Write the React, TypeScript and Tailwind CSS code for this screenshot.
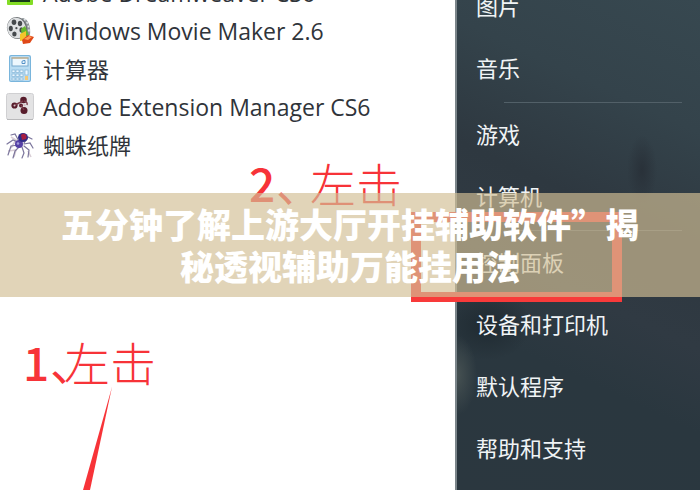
import type { ReactNode } from "react";

const glyph = "size-7 shrink-0";

function DreamweaverIcon() {
  return (
    <svg viewBox="0 0 28 28" className={glyph} aria-hidden="true">
      <rect x="1" y="0" width="26" height="26" rx="1" fill="#83dc25" />
      <rect x="4" y="3" width="20" height="20" fill="#173a19" />
    </svg>
  );
}

function MovieIcon() {
  return (
    <svg viewBox="0 0 28 28" className={glyph} aria-hidden="true">
      <path d="M17 1c5 1 8 8 7 17l-8 4-5-19z" fill="#8e9497" />
      <path d="M18 2c4 3 5 8 5 14" stroke="#dfe3e5" strokeWidth="1.6" strokeDasharray="2 2" fill="none" />
      <ellipse cx="11" cy="11" rx="10" ry="11" transform="rotate(-12 11 11)" fill="#6b6f72" />
      <ellipse cx="10.5" cy="11" rx="9.2" ry="10.4" transform="rotate(-12 10.5 11)" fill="#dfe1e3" />
      <g fill="#45494c">
        <ellipse cx="8" cy="5.2" rx="2.3" ry="2.7" />
        <ellipse cx="14" cy="6.5" rx="2.2" ry="2.8" />
        <ellipse cx="4.8" cy="11.5" rx="2" ry="2.8" />
        <ellipse cx="15.4" cy="13" rx="2" ry="2.7" />
        <ellipse cx="8.4" cy="17" rx="2.2" ry="2.6" />
        <circle cx="10.4" cy="11.2" r="1.1" />
      </g>
      <path d="M15 12l4-3 4 9-7 3z" fill="#68b82d" />
      <path d="M14 17l6-3v9l-6 1z" fill="#f3c52b" />
      <path d="M16 23l6-5 6 2-4 6-7 1z" fill="#df4818" />
      <path d="M18 22l5-3 3 1-4 3z" fill="#ff9b53" />
    </svg>
  );
}

function CalculatorIcon() {
  return (
    <svg viewBox="0 0 28 28" className={glyph} aria-hidden="true">
      <rect x="3" y="0" width="22" height="27" rx="2" fill="#79b5dc" />
      <rect x="4" y="1" width="20" height="25" rx="1.5" fill="#b9dcf2" />
      <rect x="6" y="3" width="16" height="8" fill="#edf7fd" stroke="#79aace" />
      <path d="M5.5 3h17" stroke="#dba968" />
      <path d="M18 5.5q-3 0-2 3h3v-3z" fill="none" stroke="#5592c8" />
      <g fill="#edf7ff" stroke="#83b4d6" strokeWidth=".7">
        <rect x="6" y="15" width="3" height="2.5" /><rect x="10" y="15" width="3" height="2.5" /><rect x="14" y="15" width="3" height="2.5" />
        <rect x="6" y="19" width="3" height="2.5" /><rect x="10" y="19" width="3" height="2.5" /><rect x="14" y="19" width="3" height="2.5" />
        <rect x="6" y="23" width="3" height="2" /><rect x="10" y="23" width="3" height="2" /><rect x="14" y="23" width="3" height="2" />
        <rect x="19" y="15" width="3" height="5" />
      </g>
      <rect x="19" y="21" width="3" height="4" fill="#f3c879" />
    </svg>
  );
}

function ExtensionIcon() {
  return (
    <svg viewBox="0 0 28 28" className={glyph} aria-hidden="true">
      <rect x=".5" y=".5" width="27" height="26" rx="2" fill="#e3e3e4" stroke="#d0d0d2" />
      <path d="M1 26.5h26" stroke="#b9b9bb" />
      <g fill="#571c2b">
        <circle cx="8.5" cy="12.5" r="3.1" /><circle cx="17.5" cy="7" r="3.3" /><circle cx="18" cy="17.5" r="3.5" /><circle cx="15" cy="12.5" r="2" />
      </g>
      <path d="M9 12l8-4M15 12l3 5M18 8q4 1 3 4" stroke="#793c4a" strokeWidth="1.4" fill="none" />
      <g fill="#d4bfc5"><circle cx="8.5" cy="12.5" r="1" /><circle cx="18.5" cy="12" r="1.2" /></g>
    </svg>
  );
}

function SpiderIcon() {
  return (
    <svg viewBox="0 0 28 28" className={glyph} aria-hidden="true">
      <path d="M5 6l5 3-5 8M2 20l8-1-2 7M22 20l3 6" stroke="#d9ced6" strokeWidth="1.6" fill="none" />
      <g fill="none" stroke="#7b759c" strokeWidth="1.2" strokeLinecap="round">
        <path d="M14 12L9 3 5 4M14 12L7 9 1 13M13 14L5 15 2 24M14 15L9 20 7 27M18 12L22 6 26 8M18 13L24 12 27 17M18 15L23 19 22 26M16 16L18 22 16 27" />
      </g>
      <ellipse cx="13" cy="13" rx="4" ry="4" fill="#5540a5" />
      <ellipse cx="17" cy="6.5" rx="5" ry="4.5" fill="#302b87" />
      <path d="M15 4c3-3 7 0 5 4l-4 1z" fill="#a71e42" />
      <circle cx="12" cy="12.5" r="1.3" fill="#a39bd9" />
    </svg>
  );
}

const programs: { name: string; latin?: boolean; icon: ReactNode }[] = [
  { name: "Adobe Dreamweaver CS6", latin: true, icon: <DreamweaverIcon /> },
  { name: "Windows Movie Maker 2.6", latin: true, icon: <MovieIcon /> },
  { name: "计算器", icon: <CalculatorIcon /> },
  { name: "Adobe Extension Manager CS6", latin: true, icon: <ExtensionIcon /> },
  { name: "蜘蛛纸牌", icon: <SpiderIcon /> },
];

const places = [["图片", "音乐"], ["游戏", "计算机"], ["控制面板", "设备和打印机", "默认程序", "帮助和支持"]];

function Note({ step, place, comma }: { step: string; place: string; comma: string }) {
  return (
    <div className={`absolute flex items-baseline whitespace-nowrap font-['Noto_Sans_CJK_SC',sans-serif] text-[46px] leading-[48px] text-[#f73338] ${place}`}>
      <span className="w-7 text-center font-medium">{step}</span>
      <span className={`font-normal ${comma}`}>、</span>
      <span className="font-light">左击</span>
    </div>
  );
}

export default function App() {
  return (
    <main className="relative flex h-screen overflow-hidden bg-white font-['Open_Sans','Noto_Sans_CJK_SC',sans-serif] text-[22px]">
      <nav aria-label="程序" className="w-[65%] shrink-0">
        <ul className="-mt-[26px] pl-1.5">
          {programs.map((p) => (
            <li key={p.name}>
              <button type="button" className="flex h-[38px] items-center gap-[9px] whitespace-nowrap text-[#30343a]">
                {p.icon}
                <span className={p.latin ? "text-[23px]" : "text-[22px]"}>{p.name}</span>
              </button>
            </li>
          ))}
        </ul>
      </nav>

      <nav
        aria-label="系统"
        className="min-w-0 flex-1 border-l-2 border-[#7b858a] bg-[#2b373f] bg-[radial-gradient(ellipse_20px_40px_at_0px_375px,#465152_0%,#46515200_100%),radial-gradient(ellipse_45px_35px_at_30px_325px,#1f2a31_0%,#1f2a3100_100%),radial-gradient(ellipse_15px_35px_at_185px_170px,#293139_0%,#29313900_100%),linear-gradient(205deg,#374850_0%,#34434b_22%,#2e3840_42%,#303a43_58%,#2a373f_72%,#2b373f_100%)]"
      >
        <div className="-mt-[25px] pr-[18px] pl-[19px]">
          {places.map((group, i) => (
            <div key={group[0]}>
              {i > 0 && <hr className="mt-[3px] ml-7 border-[#526068]" />}
              {group.map((name) => (
                <button key={name} type="button" className="flex h-[62px] w-full items-center whitespace-nowrap text-[#f0f4f6]">
                  {name}
                </button>
              ))}
            </div>
          ))}
        </div>
      </nav>

      <div className="absolute top-[212px] left-[411px] h-[90px] w-[211px] border-10 border-[#f83a3a]" />
      <Note step="2" place="top-[158px] left-[248px]" comma="w-[34px]" />
      <Note step="1" place="top-[337px] left-[22px]" comma="w-[14px]" />
      <svg viewBox="0 0 30 103" className="absolute top-[387px] left-[83px] h-[103px] w-[30px]" aria-hidden="true">
        <path d="M29 0L0 103h7z" fill="#f73338" />
      </svg>

      <h1 className="absolute inset-x-0 top-[193px] bg-[#d2bf95]/67 px-[51px] py-2.5 text-center font-['Noto_Sans_CJK_SC',sans-serif] text-[34px] leading-[42px] font-black text-white">
        五分钟了解上游大厅开挂辅助软件”揭秘透视辅助万能挂用法
      </h1>
    </main>
  );
}
